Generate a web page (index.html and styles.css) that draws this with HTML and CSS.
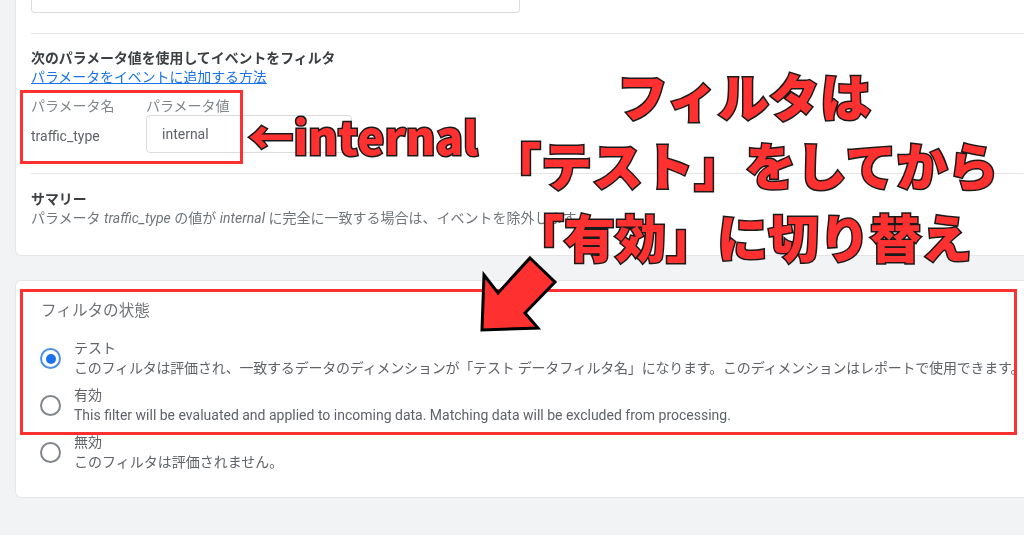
FILE: index.html
```html
<!DOCTYPE html>
<html lang="ja">
<head>
  <meta charset="UTF-8" />
  <meta name="viewport" content="width=device-width, initial-scale=1.0" />
  <title>フィルタの状態</title>
  <link rel="stylesheet" href="styles.css">
</head>
<body>
  <div class="page">
    <section class="card card-params">
      <div class="name-box"></div>
      <div class="section filter-section">
        <h3>次のパラメータ値を使用してイベントをフィルタ</h3>
        <a class="help-link" href="#">パラメータをイベントに追加する方法</a>
        <div class="param-grid">
          <span class="param-label">パラメータ名</span>
          <span class="param-label">パラメータ値</span>
          <span class="param-name">traffic_type</span>
          <div class="param-input">internal</div>
        </div>
      </div>
      <div class="section summary-section">
        <h3>サマリー</h3>
        <p>パラメータ <i>traffic_type</i> の値が <i>internal</i> に完全に一致する場合は、イベントを除外します。</p>
      </div>
    </section>

    <section class="card card-state">
      <h4>フィルタの状態</h4>
      <div class="option">
        <span class="radio checked"></span>
        <div class="option-text">
          <div>テスト</div>
          <div class="long-line">このフィルタは評価され、一致するデータのディメンションが「テスト データフィルタ名」になります。このディメンションはレポートで使用できます。</div>
        </div>
      </div>
      <div class="option">
        <span class="radio"></span>
        <div class="option-text">
          <div>有効</div>
          <div>This filter will be evaluated and applied to incoming data. Matching data will be excluded from processing.</div>
        </div>
      </div>
      <div class="option">
        <span class="radio"></span>
        <div class="option-text">
          <div>無効</div>
          <div>このフィルタは評価されません。</div>
        </div>
      </div>
    </section>

    <!-- annotations drawn on top of the screenshot -->
    <div class="mark mark-param"></div>
    <div class="mark mark-state"></div>
    <div class="note note-internal">←internal</div>
    <div class="note note-line1">フィルタは</div>
    <div class="note note-line2">「テスト」をしてから</div>
    <div class="note note-line3">「有効」に切り替え</div>
    <svg class="arrow" width="100" height="90" viewBox="0 0 100 90">
      <path d="M60 8 L85 32 L55 63 L68 78 L12 80 L14 25 L28 43 Z" fill="#ff3030" stroke="#000" stroke-width="3"/>
    </svg>
  </div>
</body>
</html>
```

FILE: styles.css
```css
* {
  box-sizing: border-box;
}
body {
  margin: 0;
  background: #fff;
  font-family: Roboto, 'Noto Sans CJK JP', sans-serif;
  color: #5f6368;
}
.page {
  position: relative;
  width: 1024px;
  height: 535px;
  overflow: hidden;
  background: #f1f3f4;
}
.card {
  margin-left: 15px;
  background: #fff;
  border: 1px solid #e4e6e8;
  border-right: none;
  border-radius: 6px 0 0 6px;
  filter: blur(0.4px);
}
.card-params {
  height: 256px;
  padding: 0 0 0 15px;
  border-top: none;
  border-radius: 0 0 0 6px;
}
.name-box {
  width: 489px;
  height: 13px;
  border: 1px solid #dadce0;
  border-top: none;
  border-radius: 0 0 4px 4px;
}
.section {
  border-top: 1px solid #e2e4e6;
}
.section h3 {
  margin: 0;
  font-size: 13.9px;
  line-height: 18px;
  font-weight: 700;
  color: #3c4043;
}
.filter-section {
  margin-top: 20px;
  height: 140px;
  padding-top: 15px;
}
.help-link {
  display: block;
  margin-top: 1px;
  font-size: 13.9px;
  line-height: 19px;
  color: #1a73e8;
}
.param-grid {
  display: grid;
  grid-template-columns: 115px 206px;
  grid-template-rows: 20px 38px;
  margin-top: 8px;
  font-size: 14px;
  align-items: center;
}
.param-label {
  color: #80868b;
}
.param-name {
  padding-top: 3px;
  font-size: 14px;
  color: #5f6368;
}
.param-input {
  height: 38px;
  padding: 0 0 0 15px;
  display: flex;
  align-items: center;
  border: 1px solid #dadce0;
  border-radius: 4px;
  font-size: 14px;
}
.summary-section {
  padding-top: 16px;
}
.summary-section p {
  margin: 1px 0 0;
  font-size: 14px;
  line-height: 19px;
  color: #70757a;
  white-space: nowrap;
}
.card-state {
  height: 218px;
  margin-top: 24px;
  padding: 20px 0 0 24px;
}
.card-state h4 {
  margin: 0 0 14px 1px;
  font-size: 15.6px;
  line-height: 20px;
  font-weight: 400;
  color: #6f7377;
}
.option {
  display: flex;
  align-items: center;
  gap: 13px;
  height: 47px;
}
.radio {
  flex: none;
  width: 21px;
  height: 21px;
  border: 2px solid #80868b;
  border-radius: 50%;
}
.radio.checked {
  border-color: #4a90ea;
  padding: 3.5px;
}
.radio.checked::after {
  content: "";
  display: block;
  width: 10px;
  height: 10px;
  border-radius: 50%;
  background: #1a73e8;
}
.option-text {
  margin-bottom: 2px;
  font-size: 14px;
  line-height: 20px;
  white-space: nowrap;
  color: #5f6368;
}
.long-line {
  letter-spacing: -0.2px;
}
.mark {
  position: absolute;
  border: 3px solid #ff3030;
}
.mark-param {
  left: 20px;
  top: 90px;
  width: 223px;
  height: 74px;
}
.mark-state {
  left: 20px;
  top: 289px;
  width: 997px;
  height: 146px;
}
.note {
  position: absolute;
  white-space: nowrap;
  color: #ff3030;
  font-family: 'Noto Sans CJK JP', sans-serif;
  font-weight: 900;
  font-size: 51px;
  line-height: 60px;
  -webkit-text-stroke: 3px #1a1a1a;
  paint-order: stroke fill;
  filter: blur(0.3px);
}
.note-internal {
  left: 248px;
  top: 105px;
  font-size: 45.5px;
}
.note-line1 {
  left: 617px;
  top: 65px;
}
.note-line2 {
  left: 490px;
  top: 134px;
}
.note-line3 {
  left: 513px;
  top: 206px;
}
.arrow {
  position: absolute;
  left: 470px;
  top: 250px;
}
```
